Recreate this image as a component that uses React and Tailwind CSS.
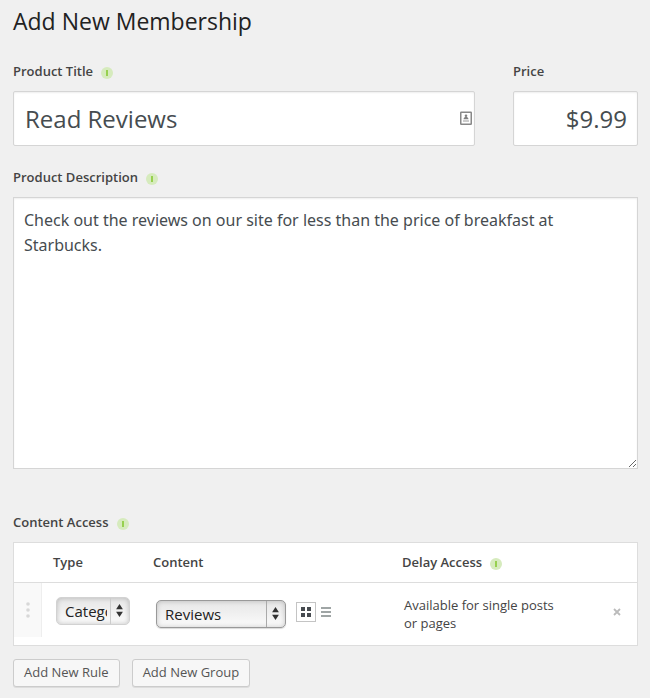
import React from 'react';

function InfoBadge() {
    return (
        <svg width="12" height="12" viewBox="0 0 12 12" className="mt-1 shrink-0" aria-hidden="true">
            <circle cx="6" cy="6" r="6" fill="#d6ebbd" />
            <rect x="5" y="3" width="2" height="6" fill="#97d04f" />
        </svg>
    );
}

function FieldLabel({ htmlFor, info, children }) {
    return (
        <div className="flex items-center gap-2 mb-[11px] h-[18px]">
            <label htmlFor={htmlFor} className="text-[13px] leading-[18px] font-semibold">
                {children}
            </label>
            {info && <InfoBadge />}
        </div>
    );
}

function SelectBox({ label, options, muted, className }) {
    return (
        <div className={`relative ${className}`}>
            <select
                aria-label={label}
                className={`appearance-none block w-full h-7 pl-2 pr-[22px] rounded-[5px] border text-[15px] leading-5 text-[#222] bg-linear-to-b from-[#e6e6e6] to-[#fbfbfb] ${
                    muted
                        ? 'border-[#d2d2d2] shadow-[inset_0_0_5px_rgba(0,0,0,0.22)]'
                        : 'border-[#999] shadow-[inset_0_0_5px_rgba(0,0,0,0.2),0_1px_1px_rgba(0,0,0,0.15)]'
                }`}
            >
                {options.map((option) => (
                    <option key={option}>{option}</option>
                ))}
            </select>
            <span
                className={`pointer-events-none absolute inset-y-px right-px w-[19px] pr-0.5 border-l flex items-center justify-center ${
                    muted ? 'border-[#ccc]' : 'border-[#aaa]'
                }`}
            >
                <svg width="7" height="13" viewBox="0 0 7 13" fill="#333" aria-hidden="true">
                    <path d="M3.5 0L6.9 5.2H.1zM3.5 13L6.9 7.8H.1z" />
                </svg>
            </span>
        </div>
    );
}

const actionButton =
    'h-7 px-[10px] rounded-[3px] border border-[#ccc] bg-[#f7f7f7] text-[13px] text-[#555] shadow-[0_1px_0_rgba(0,0,0,0.08)] hover:bg-gray-50';

export default function App() {
    return (
        <div className="min-h-screen bg-[#f0f0f0] pt-[6px] pb-[10px] pl-[13px] pr-3 font-['Open_Sans',sans-serif] text-[#444]">
            <h1 className="text-[23px] leading-[30px] text-[#222]">Add New Membership</h1>

            <div className="flex gap-[38px] mt-[26px]">
                <div className="flex-1 min-w-0">
                    <FieldLabel htmlFor="title" info>Product Title</FieldLabel>
                    <div className="relative">
                        <input
                            id="title"
                            type="text"
                            defaultValue="Read Reviews"
                            className="block w-full h-[55px] pl-[11px] pr-8 bg-white border border-[#d5d5d5] rounded-xs text-2xl text-[#464c50] shadow-[inset_0_1px_2px_rgba(0,0,0,0.07)]"
                        />
                        <svg
                            width="12"
                            height="14"
                            viewBox="0 0 12 14"
                            className="pointer-events-none absolute right-[3px] top-5"
                            aria-hidden="true"
                        >
                            <rect x="0.75" y="1.25" width="10.5" height="12" rx="0.5" fill="#fff" stroke="#888" strokeWidth="1.5" />
                            <circle cx="6" cy="4.7" r="1.3" fill="#808080" />
                            <path d="M3.5 8.2C3.5 6.5 4.8 6 6 6s2.5.5 2.5 2.2z" fill="#808080" />
                            <path d="M3 10h6" stroke="#999" />
                        </svg>
                    </div>
                </div>
                <div className="w-[125px]">
                    <FieldLabel htmlFor="price">Price</FieldLabel>
                    <input
                        id="price"
                        type="text"
                        defaultValue="$9.99"
                        className="block w-full h-[55px] px-[10px] bg-white border border-[#d5d5d5] rounded-xs text-2xl text-right text-[#464c50] shadow-[inset_0_1px_2px_rgba(0,0,0,0.07)]"
                    />
                </div>
            </div>

            <div className="mt-[22px]">
                <FieldLabel htmlFor="description" info>Product Description</FieldLabel>
                <textarea
                    id="description"
                    rows={10}
                    defaultValue="Check out the reviews on our site for less than the price of breakfast at Starbucks."
                    className="block w-full px-[10px] py-[10px] bg-white border border-[#d5d5d5] font-['Noto_Sans',sans-serif] text-base leading-[25px] text-[#464c50] shadow-[inset_0_1px_2px_rgba(0,0,0,0.07)]"
                />
            </div>

            <div className="mt-11">
                <FieldLabel htmlFor="rules" info>Content Access</FieldLabel>
                <div className="bg-white border border-[#ddd]">
                    <table id="rules" className="w-full table-fixed text-[13px] leading-[18px] text-left">
                        <thead>
                            <tr className="h-[39px] border-b border-[#ddd]">
                                <th className="w-7" aria-label="Order" />
                                <th className="w-[100px] pl-[11px] font-semibold">Type</th>
                                <th className="w-[249px] pl-[11px] font-semibold">Content</th>
                                <th className="pl-[11px] font-semibold">
                                    <span className="flex items-center gap-2">
                                        Delay Access <InfoBadge />
                                    </span>
                                </th>
                                <th className="w-[38px]" aria-label="Remove" />
                            </tr>
                        </thead>
                        <tbody>
                            <tr className="h-[63px]">
                                <td className="p-0 align-top">
                                    <div className="h-[54px] bg-[#f9f9f9] border-r border-[#eee] flex items-center justify-center">
                                        <svg width="4" height="16" viewBox="0 0 4 16" fill="#d8d8d8" aria-hidden="true">
                                            <circle cx="2" cy="2" r="1.8" />
                                            <circle cx="2" cy="8" r="1.8" />
                                            <circle cx="2" cy="14" r="1.8" />
                                        </svg>
                                    </div>
                                </td>
                                <td className="pl-[14px] pt-[14px] align-top">
                                    <SelectBox label="Type" options={['Category', 'Page', 'Post']} muted className="w-[74px]" />
                                </td>
                                <td className="pl-[14px] pt-[17px] align-top">
                                    <div className="flex gap-[10px]">
                                        <SelectBox label="Content" options={['Reviews', 'News']} className="w-[130px]" />
                                        <div className="flex items-center gap-[5px] h-6">
                                            <button
                                                aria-label="Grid view"
                                                className="w-5 h-5 border border-[#c4c4c4] flex items-center justify-center"
                                            >
                                                <svg width="10" height="10" viewBox="0 0 10 10" fill="#464b50">
                                                    <path d="M0 0h4v4H0zM6 0h4v4H6zM0 6h4v4H0zM6 6h4v4H6z" />
                                                </svg>
                                            </button>
                                            <button aria-label="List view">
                                                <svg width="10" height="10" viewBox="0 0 10 10" fill="#9fa5a5">
                                                    <path d="M0 0h10v2H0zM0 4h10v2H0zM0 8h10v2H0z" />
                                                </svg>
                                            </button>
                                        </div>
                                    </div>
                                </td>
                                <td className="pl-[13px] pr-10">Available for single posts or pages</td>
                                <td className="pb-1">
                                    <button aria-label="Remove rule" className="flex pl-[14px]">
                                        <svg width="8" height="8" viewBox="0 0 8 8" stroke="#bbb" strokeWidth="1.8">
                                            <path d="M1 1l6 6M7 1L1 7" />
                                        </svg>
                                    </button>
                                </td>
                            </tr>
                        </tbody>
                    </table>
                </div>
            </div>

            <div className="flex gap-3 mt-[13px]">
                <button className={actionButton}>Add New Rule</button>
                <button className={actionButton}>Add New Group</button>
            </div>
        </div>
    );
}
